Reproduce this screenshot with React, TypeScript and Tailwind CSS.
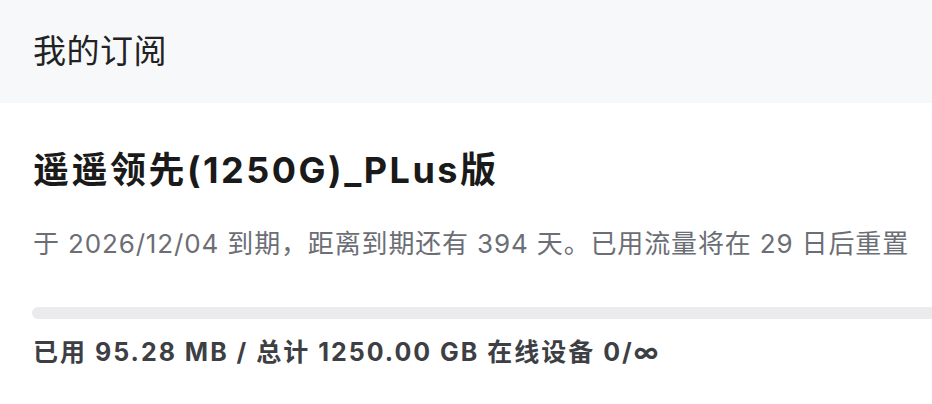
export default function App() {
  const font = { fontFamily: 'Inter, "Noto Sans CJK SC", sans-serif' }

  return (
    <div className="w-[932px] h-[404px] overflow-hidden bg-white" style={font}>
      <div className="h-[103px] bg-[#f7f8fa] flex items-center px-[33px]">
        <h2 className="text-[33px] leading-none text-[#222222] tracking-[0.5px]">我的订阅</h2>
      </div>
      <div className="pl-[33px] pt-[45px]">
        <h3 className="text-[36px] leading-[44px] font-bold text-[#1a1a1a] tracking-[2.5px]">
          遥遥领先(1250G)_PLus版
        </h3>
        <p className="mt-[36px] text-[26px] leading-[32px] text-[#6b6e75] tracking-[0.85px]">
          于 2026/12/04 到期，距离到期还有 394 天。已用流量将在 29 日后重置
        </p>
      </div>
      <div className="mt-[47px] ml-[32px] h-[12px] rounded-l-full bg-[#ebebed] blur-[0.5px]" />
      <p className="mt-[18px] pl-[33px] text-[25px] leading-[30px] font-bold text-[#3d3f44] tracking-[2px]">
        已用 95.28 MB / 总计 1250.00 GB 在线设备 0/∞
      </p>
    </div>
  )
}
